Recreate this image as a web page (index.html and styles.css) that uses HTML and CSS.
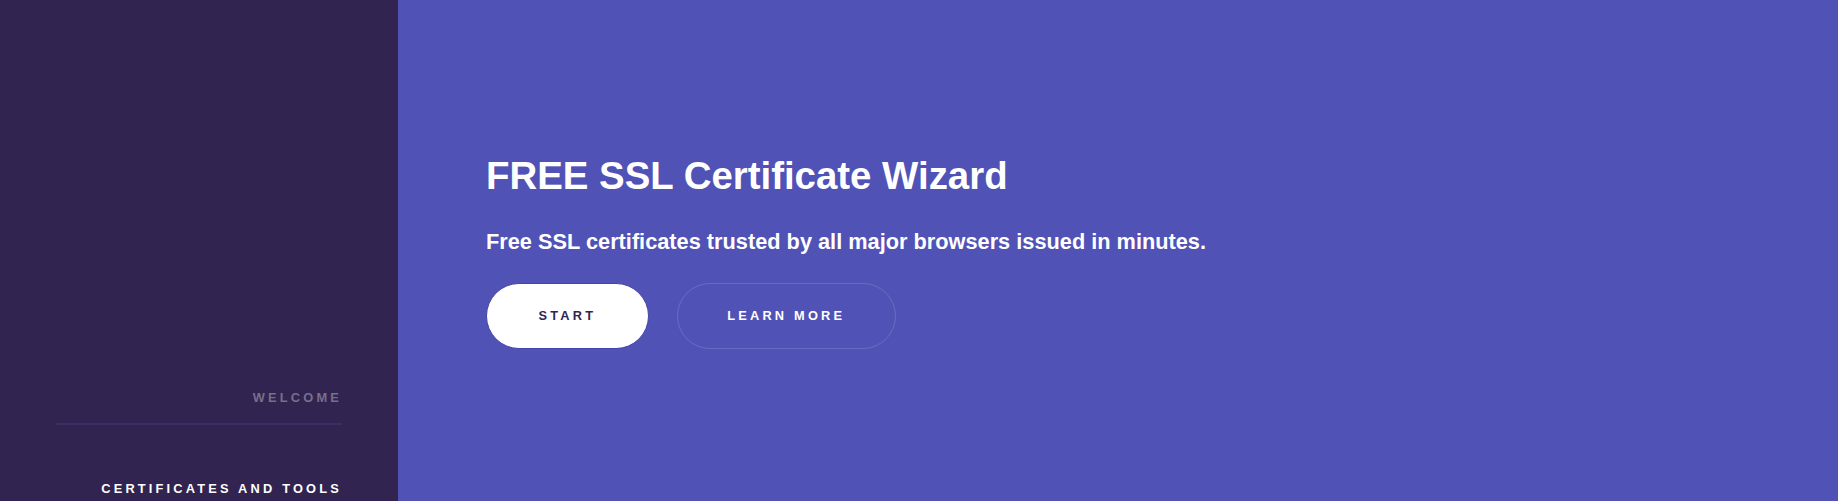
FILE: index.html
```html
<!DOCTYPE html>
<html lang="en">
<head>
  <meta charset="UTF-8" />
  <meta name="viewport" content="width=device-width, initial-scale=1.0" />
  <title>FREE SSL Certificate Wizard</title>
  <link rel="stylesheet" href="styles.css">
</head>
<body>
  <div class="page">
    <aside class="sidebar">
      <nav class="side-nav">
        <ul>
          <li><a href="#intro" class="active">Welcome</a></li>
          <li><a href="#tools">Certificates and Tools</a></li>
        </ul>
      </nav>
    </aside>

    <main class="wrapper">
      <section class="intro" id="intro">
        <h1>FREE SSL Certificate Wizard</h1>
        <p class="lead">Free SSL certificates trusted by all major browsers issued in minutes.</p>
        <div class="actions">
          <a href="#start" class="button primary">Start</a>
          <a href="#tools" class="button">Learn More</a>
        </div>
      </section>
    </main>
  </div>
</body>
</html>
```

FILE: styles.css
```css
html,
body {
  margin: 0;
  height: 100%;
}

body {
  font-family: 'Liberation Sans', Arial, sans-serif;
  background: #5052b5;
  color: #fff;
  overflow: hidden;
}

.page {
  display: flex;
  min-height: 100%;
}

/* left menu */
.sidebar {
  width: 398px;
  flex-shrink: 0;
  background: #312450;
  padding: 373px 56px 0 56px;
  box-sizing: border-box;
}

.side-nav ul {
  list-style: none;
  margin: 0;
  padding: 0;
  text-align: right;
}

.side-nav li + li {
  margin-top: 39px;
}

.side-nav a {
  display: block;
  padding: 14px 0;
  font-size: 12.8px;
  line-height: 22px;
  font-weight: bold;
  letter-spacing: 0.25em;
  text-transform: uppercase;
  text-decoration: none;
  color: #fff;
  border-bottom: 2px solid #3b2e66;
}

.side-nav a.active {
  color: rgba(255, 255, 255, 0.35);
}

/* main area */
.wrapper {
  flex: 1;
  background: #5052b5;
}

.intro {
  padding: 153px 0 0 88px;
}

.intro h1 {
  margin: 0;
  font-size: 38.4px;
  line-height: 46px;
  font-weight: bold;
}

.lead {
  margin: 30px 0 0;
  font-size: 21.75px;
  line-height: 26px;
  font-weight: bold;
}

.actions {
  display: flex;
  gap: 28px;
  margin-top: 28px;
}

.button {
  display: inline-block;
  height: 66px;
  line-height: 64px;
  padding: 0 49.5px;
  box-sizing: border-box;
  border: 1px solid rgba(255, 255, 255, 0.15);
  border-radius: 33px;
  font-size: 12.8px;
  font-weight: bold;
  letter-spacing: 0.25em;
  text-transform: uppercase;
  text-decoration: none;
  color: #fff;
}

.button.primary {
  padding: 0 51.5px;
  background: #fff;
  color: #312450;
  border-color: #4443ab;
}
```
